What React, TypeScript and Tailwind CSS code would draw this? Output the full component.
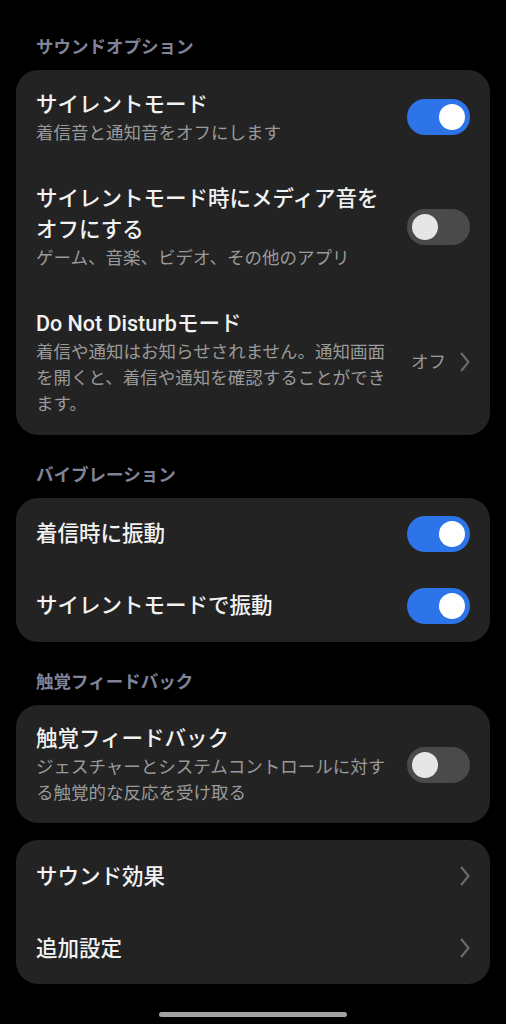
import React from "react";

const font = "font-['Roboto','Noto_Sans_CJK_JP',sans-serif]";

const Toggle: React.FC<{ on: boolean }> = ({ on }) => (
  <div
    className={`flex-none w-[63px] h-[36px] rounded-full flex items-center px-[5px] ${
      on ? "bg-[#2c74e8] justify-end" : "bg-[#4a4a4a] justify-start"
    }`}
  >
    <div
      className={`w-[26px] h-[26px] rounded-full ${
        on ? "bg-white" : "bg-[#e6e6e6]"
      }`}
    />
  </div>
);

const Chevron: React.FC = () => (
  <svg width="10" height="20" viewBox="0 0 10 20" className="flex-none">
    <polyline
      points="1.5,1.5 8.5,10 1.5,18.5"
      fill="none"
      stroke="#6c6c6c"
      strokeWidth="2"
      strokeLinecap="round"
      strokeLinejoin="round"
    />
  </svg>
);

const SectionHeader: React.FC<{ label: string }> = ({ label }) => (
  <h2 className="pl-5 text-[17.5px] leading-[24px] font-bold text-[#7f8499] mb-[11px]">
    {label}
  </h2>
);

type RowProps = {
  title: string;
  subtitle?: string;
  right?: React.ReactNode;
};

const titleCls = "text-[21.5px] leading-[31px] font-medium text-[#f2f2f2]";
const subCls = "text-[17.5px] leading-[26px] text-[#9a9a9a]";

const Row: React.FC<RowProps> = ({ title, subtitle, right }) => {
  if (!subtitle) {
    return (
      <div className="h-[72px] px-5 flex items-center gap-4">
        <div className={`flex-1 ${titleCls}`}>{title}</div>
        {right}
      </div>
    );
  }
  return (
    <div className="px-5 pt-[18.5px] pb-[18.5px] flex items-center gap-4">
      <div className="flex-1 min-w-0">
        <div className={titleCls}>{title}</div>
        <div className={subCls}>{subtitle}</div>
      </div>
      {right}
    </div>
  );
};

const Card: React.FC<{ children: React.ReactNode }> = ({ children }) => (
  <div className="bg-[#232323] rounded-[22px] overflow-hidden">{children}</div>
);

export default function App() {
  return (
    <div className={`${font} bg-black min-h-[1024px] w-full px-4 pt-[35px] pb-[7px] flex flex-col`}>
      <SectionHeader label="サウンドオプション" />
      <Card>
        <Row
          title="サイレントモード"
          subtitle="着信音と通知音をオフにします"
          right={<Toggle on />}
        />
        <Row
          title="サイレントモード時にメディア音をオフにする"
          subtitle="ゲーム、音楽、ビデオ、その他のアプリ"
          right={<Toggle on={false} />}
        />
        <div className="px-5 pt-[18.5px] pb-[18px] flex items-center gap-[20px]">
          <div className="flex-1 min-w-0">
            <div className={titleCls}>Do Not Disturbモード</div>
            <div className={subCls}>
              着信や通知はお知らせされません。通知画面を開くと、着信や通知を確認することができます。
            </div>
          </div>
          <div className="flex items-center gap-[14px]">
            <span className="text-[17.5px] text-[#9a9a9a]">オフ</span>
            <Chevron />
          </div>
        </div>
      </Card>

      <div className="mt-[28px]">
        <SectionHeader label="バイブレーション" />
      </div>
      <Card>
        <Row title="着信時に振動" right={<Toggle on />} />
        <Row title="サイレントモードで振動" right={<Toggle on />} />
      </Card>

      <div className="mt-[28px]">
        <SectionHeader label="触覚フィードバック" />
      </div>
      <Card>
        <div className="px-5 pt-[18.5px] pb-[17px] flex items-center gap-4">
          <div className="flex-1 min-w-0">
            <div className={titleCls}>触覚フィードバック</div>
            <div className={subCls}>
              ジェスチャーとシステムコントロールに対する触覚的な反応を受け取る
            </div>
          </div>
          <Toggle on={false} />
        </div>
      </Card>

      <div className="mt-[17px]">
        <Card>
          <Row title="サウンド効果" right={<Chevron />} />
          <Row title="追加設定" right={<Chevron />} />
        </Card>
      </div>

      <div className="mt-auto flex justify-center">
        <div className="w-[188px] h-[5px] rounded-full bg-[#a3a3a3]" />
      </div>
    </div>
  );
}
